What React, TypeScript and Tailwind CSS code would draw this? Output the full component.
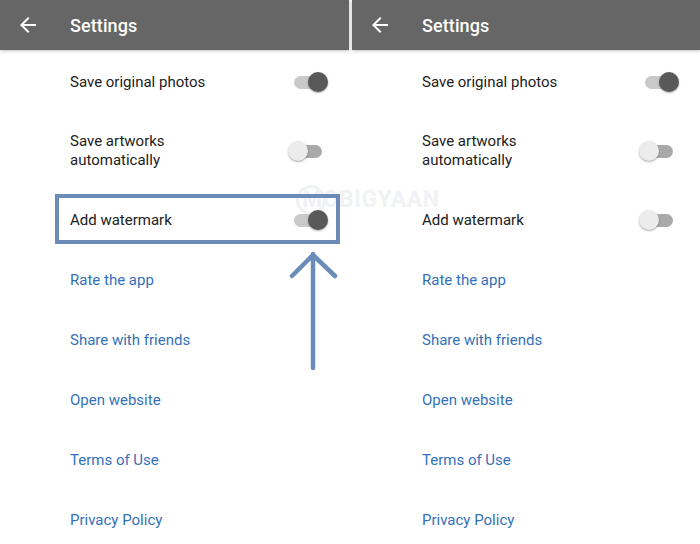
import React from "react";

type Row = { label: string; lines?: string[]; toggle?: boolean; link?: boolean };

const BackArrow = () => (
  <svg width="24" height="24" viewBox="0 0 24 24" fill="white">
    <path d="M20 11H7.83l5.59-5.59L12 4l-8 8 8 8 1.41-1.41L7.83 13H20v-2z" />
  </svg>
);

const Toggle = ({ on }: { on: boolean }) => (
  <div className="relative w-[40px] h-5 shrink-0">
    <div
      className={`absolute left-[6px] right-[6px] top-[4px] h-[13px] rounded-full ${
        on ? "bg-[#c9c9c9]" : "bg-[#a9a9a9]"
      }`}
    />
    <div
      className={`absolute top-0 w-5 h-5 rounded-full shadow-[0_1px_2px_rgba(0,0,0,0.35)] ${
        on ? "right-0 bg-[#595959]" : "left-0 bg-[#ececec]"
      }`}
    />
  </div>
);

const SettingsPanel = ({ toggles, highlight }: { toggles: boolean[]; highlight?: boolean }) => {
  const rows: Row[] = [
    { label: "Save original photos", toggle: true },
    { label: "", lines: ["Save artworks", "automatically"], toggle: true },
    { label: "Add watermark", toggle: true },
    { label: "Rate the app", link: true },
    { label: "Share with friends", link: true },
    { label: "Open website", link: true },
    { label: "Terms of Use", link: true },
    { label: "Privacy Policy", link: true },
  ];

  let t = 0;
  return (
    <div className="relative flex flex-col h-full flex-1">
      <div className="h-[50px] shrink-0 bg-[#666666] flex items-center pl-[16px] shadow-[0_1px_3px_rgba(0,0,0,0.25)] z-10">
        <BackArrow />
        <span className="ml-[30px] text-white text-[18px] font-medium tracking-[0.1px]">Settings</span>
      </div>
      <div className="flex flex-col shrink-0 pt-[2px]">
        {rows.map((r, i) => {
          const on = r.toggle ? toggles[t++] : false;
          return (
            <div
              key={i}
              className={`flex shrink-0 items-center justify-between pl-[70px] pr-[21px] ${
                r.lines ? "h-[78px]" : "h-[60px]"
              }`}
            >
              {r.lines ? (
                <div className="text-[15px] leading-[19px] text-[#212121]">
                  {r.lines.map((l) => (
                    <div key={l}>{l}</div>
                  ))}
                </div>
              ) : (
                <span className={`text-[15px] leading-5 ${r.link ? "text-[#3571b8]" : "text-[#212121]"}`}>
                  {r.label}
                </span>
              )}
              {r.toggle && <Toggle on={on} />}
            </div>
          );
        })}
      </div>
      {highlight && (
        <div className="absolute left-[55px] top-[194px] w-[285px] h-[50px] border-[4px] border-[#6b8cb8]" />
      )}
    </div>
  );
};

export default function App() {
  return (
    <div className="relative w-[700px] h-[544px] bg-white overflow-hidden font-['Roboto',sans-serif]">
      {/* watermark, behind the content */}
      <div className="absolute left-[296px] top-[183px] flex items-center pointer-events-none select-none">
        <div className="w-[30px] h-[30px] rounded-full border-[3px] border-[#eef2f7] -mr-[24px]" />
        <span className="text-[23px] font-bold tracking-[0.5px] text-[#f0f2f5]">MOBIGYAAN</span>
      </div>

      <div className="relative flex gap-[3px] w-full h-full">
        <div className="w-[349px] h-full flex">
          <SettingsPanel toggles={[true, false, true]} highlight />
        </div>
        <div className="flex-1 h-full flex">
          <SettingsPanel toggles={[true, false, false]} />
        </div>
      </div>

      {/* annotation arrow */}
      <svg className="absolute left-[288px] top-[250px]" width="52" height="122" viewBox="0 0 52 122">
        <path d="M25 4 V118 M4 26 L25 5 L47 26" fill="none" stroke="#6b8cb8" strokeWidth="4.5" strokeLinecap="round" strokeLinejoin="round" />
      </svg>
    </div>
  );
}
